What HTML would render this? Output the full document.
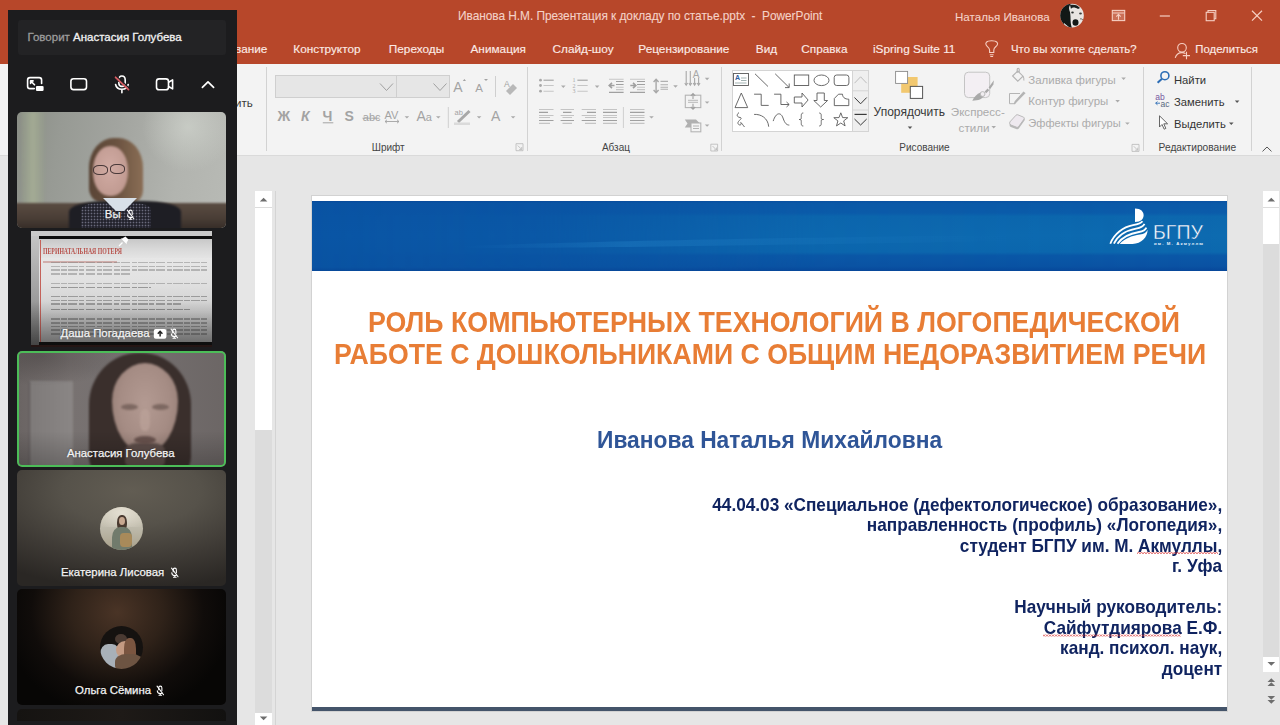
<!DOCTYPE html>
<html><head><meta charset="utf-8">
<style>
*{margin:0;padding:0;box-sizing:border-box}
html,body{width:1280px;height:725px;overflow:hidden;background:#E6E6E6;font-family:"Liberation Sans",sans-serif;position:relative}
.a{position:absolute}
.t{position:absolute;white-space:nowrap;line-height:1}
#top{left:0;top:0;width:1280px;height:64px;background:#B7472A}
#top .t{color:#FBEAE5;font-size:11.8px;-webkit-text-stroke:0.15px #FBEAE5}
#top .tt{color:#F4D2C8;-webkit-text-stroke:0.1px #F4D2C8}
#rib{left:0;top:64px;width:1280px;height:91.5px;background:#F3F3F3;border-bottom:1px solid #DADADA}
.sep{position:absolute;width:1px;background:#D2D2D2}
.dis{color:#ABABAB}
.lbl{color:#444;font-size:10px}
#slide{left:312px;top:196px;width:915px;height:515px;background:#fff}
#panel{left:8px;top:10px;width:229px;height:711px;background:#1C1C1E}
.tile{position:absolute;left:9px;width:209px;border-radius:5px;overflow:hidden}
.nm{position:absolute;color:#F4F4F4;font-size:11.4px;white-space:nowrap;line-height:1;-webkit-text-stroke:0.25px #F4F4F4;text-shadow:0 0 2px rgba(0,0,0,0.5)}
</style></head><body>
<!-- workspace -->
<div class="a" style="left:255px;top:191px;width:17px;height:534px;background:#DCDCDC"></div>
<div class="a" style="left:255px;top:191px;width:17px;height:16px;background:#fff"></div>
<div class="a" style="left:255px;top:208px;width:17px;height:222px;background:#fff"></div>
<div class="a" style="left:255px;top:713px;width:17px;height:12px;background:#fff"></div>
<div class="a" style="left:275px;top:191px;width:1px;height:534px;background:#D4D4D4"></div>
<div class="a" style="left:1263px;top:191px;width:16px;height:466px;background:#DCDCDC"></div>
<div class="a" style="left:1263px;top:191px;width:16px;height:16px;background:#fff"></div>
<div class="a" style="left:1263px;top:208px;width:16px;height:36px;background:#fff"></div>
<div class="a" style="left:1263px;top:657px;width:16px;height:15px;background:#fff"></div>
<svg class="a" style="left:0;top:0" width="1280" height="725" viewBox="0 0 1280 725">
  <g fill="#6E6E6E">
    <path d="M259.8 201.5 h7.6 l-3.8 -3.8z M259.8 716.5 h7.6 l-3.8 3.8z"/>
    <path d="M1267.5 201.5 h7.6 l-3.8 -3.8z M1267.5 662 h7.6 l-3.8 3.8z"/>
    <path d="M1267.5 682 h7.6 l-3.8 -3.8z M1267.5 686 h7.6 l-3.8 -3.8z M1267.5 696 h7.6 l-3.8 3.8z M1267.5 700 h7.6 l-3.8 3.8z"/>
  </g>
</svg>
<!-- slide -->
<div class="a" style="left:311px;top:195px;width:917px;height:517px;border:1px solid #D2D2D2"></div>
<div id="slide" class="a">
  <div class="a" style="left:0;top:5px;width:915px;height:70px;background:linear-gradient(180deg,#08499A 0px,#0A53A3 2px,#0A55A5 50%,#0A53A2 66px,#08499A 70px)"></div>
  <svg class="a" style="left:0;top:5px" width="915" height="70" viewBox="0 0 915 70">
    <defs>
      <linearGradient id="vg" x1="0" x2="0" y1="0" y2="1"><stop offset="0" stop-color="#0A52A2"/><stop offset="0.04" stop-color="#0B5AA8"/><stop offset="0.17" stop-color="#0B5CAA"/><stop offset="0.22" stop-color="#0C68AE"/><stop offset="0.5" stop-color="#0D6BB0"/><stop offset="0.73" stop-color="#0C68AE"/><stop offset="0.78" stop-color="#0A58A7"/><stop offset="0.93" stop-color="#0A53A3"/><stop offset="1" stop-color="#07479A"/></linearGradient>
      <linearGradient id="hm" x1="0" x2="1" y1="0" y2="0"><stop offset="0" stop-color="#fff" stop-opacity="0"/><stop offset="0.25" stop-color="#fff" stop-opacity="0.15"/><stop offset="0.55" stop-color="#fff" stop-opacity="0.85"/><stop offset="1" stop-color="#fff" stop-opacity="1"/></linearGradient>
      <mask id="mk"><rect x="0" y="0" width="915" height="70" fill="url(#hm)"/></mask>
      <linearGradient id="sk" x1="0" x2="1" y1="0" y2="0"><stop offset="0" stop-color="#2A8CD0" stop-opacity="0"/><stop offset="0.3" stop-color="#2A8CD0" stop-opacity="0.3"/><stop offset="0.6" stop-color="#2A8CD0" stop-opacity="0.15"/><stop offset="1" stop-color="#2A8CD0" stop-opacity="0"/></linearGradient>
    </defs>
    <rect x="0" y="0" width="915" height="70" fill="url(#vg)" mask="url(#mk)"/>
    <path d="M150 45 C300 40 450 37 700 34 L700 40 C450 44 300 47 150 47 Z" fill="url(#sk)"/>
  </svg>
  <div class="a" style="left:0;top:511px;width:915px;height:4px;background:#44546A"></div>
</div>
<svg class="a" style="left:1100px;top:200px" width="110" height="50" viewBox="1100 200 110 50">
  <g transform="translate(1104 204)">
    <path d="M31 4.6 C37 4.6 39.6 8 39.6 11.3 C39.6 15 37 18 31 18 Z" fill="#fff"/>
    <g stroke="#fff" stroke-width="1.8" fill="none">
      <path d="M6.3 39.7 C10 30 19 23 29 21.2 C34 20.3 37 19.5 38.5 17.3"/>
      <path d="M9.9 39.7 C13.5 32 22 26.5 32 24.6 C36.5 23.8 39.3 22.5 40.5 19.9"/>
      <path d="M13.5 39.7 C17.5 34 26 29.5 35 28 C39 27.3 41.3 26 42.4 23.6"/>
    </g>
    <path d="M15.8 39.9 C20 35 28 31.5 36 30.6 C40 30 42.5 28.5 43.6 25.8 C43.6 33 37.5 39.9 28.5 39.9 Z" fill="#fff"/>
  </g>
  <text x="1153" y="239" font-family="Liberation Sans" font-size="21" fill="#fff" stroke="#0C66AE" stroke-width="0.45" textLength="50" lengthAdjust="spacingAndGlyphs">БГПУ</text>
  <text x="1154" y="245" font-family="Liberation Sans" font-weight="700" font-size="4.3" fill="#EAF2FB" textLength="49" lengthAdjust="spacing">им. М. Акмуллы</text>
</svg>
<div class="t" style="left:368.4px;top:307.7px;font-size:28.7px;font-weight:700;color:#E87D35;transform:scaleX(0.932);transform-origin:0 0">РОЛЬ КОМПЬЮТЕРНЫХ ТЕХНОЛОГИЙ В ЛОГОПЕДИЧЕСКОЙ</div>
<div class="t" style="left:334px;top:340px;font-size:28.7px;font-weight:700;color:#E87D35;transform:scaleX(0.930);transform-origin:0 0">РАБОТЕ С ДОШКОЛЬНИКАМИ С ОБЩИМ НЕДОРАЗВИТИЕМ РЕЧИ</div>
<div class="t" style="left:596.8px;top:427.7px;font-size:24.7px;font-weight:700;color:#2F5597;transform:scaleX(0.923);transform-origin:0 0">Иванова Наталья Михайловна</div>
<div class="a" style="left:400px;top:495px;width:822.2px;text-align:right;font-size:18.1px;line-height:20.45px;font-weight:700;color:#102460;white-space:nowrap;transform:scaleX(0.950);transform-origin:100% 0">44.04.03 «Специальное (дефектологическое) образование»,<br>направленность (профиль) «Логопедия»,<br>студент БГПУ им. М. Акмуллы,<br>г. Уфа<br>&nbsp;<br>Научный руководитель:<br>Сайфутдиярова Е.Ф.<br>канд. психол. наук,<br>доцент</div>
<svg class="a" style="left:0;top:0" width="1280" height="725" viewBox="0 0 1280 725">
  <defs><pattern id="zz" x="0" y="0" width="3" height="2" patternUnits="userSpaceOnUse"><path d="M0 1.6 L1.5 0.4 L3 1.6" stroke="#D42A2A" stroke-width="0.85" fill="none"/></pattern></defs>
  <rect x="1137" y="552" width="81" height="2" fill="url(#zz)"/>
  <rect x="1043" y="634.5" width="138" height="2" fill="url(#zz)"/>
</svg>
<!-- top bar -->
<div id="top" class="a">
  <div class="t tt" style="left:458px;top:11px;font-size:11.9px;letter-spacing:-0.045px">Иванова Н.М. Презентация к докладу по статье.pptx&nbsp; -&nbsp; PowerPoint</div>
  <div class="t tt" style="left:955px;top:11px;font-size:11.6px">Наталья Иванова</div>
  <div class="t" style="left:208px;top:43.6px">Рисование</div>
  <div class="t" style="left:293.3px;top:43.6px">Конструктор</div>
  <div class="t" style="left:388.8px;top:43.6px">Переходы</div>
  <div class="t" style="left:470.5px;top:43.6px">Анимация</div>
  <div class="t" style="left:552.5px;top:43.6px">Слайд-шоу</div>
  <div class="t" style="left:638.3px;top:43.6px">Рецензирование</div>
  <div class="t" style="left:755.8px;top:43.6px">Вид</div>
  <div class="t" style="left:801.3px;top:43.6px">Справка</div>
  <div class="t" style="left:873px;top:43.6px">iSpring Suite 11</div>
  <div class="t" style="left:1011px;top:43.6px;font-size:11.36px">Что вы хотите сделать?</div>
  <div class="t" style="left:1195.3px;top:43.6px;font-size:11.35px">Поделиться</div>
  <svg class="a" style="left:0;top:0" width="1280" height="64" viewBox="0 0 1280 64">
    <g fill="none" stroke="#F6CFC3" stroke-width="1.1">
      <!-- bulb -->
      <path d="M989.6 52.5 L989.6 50 C989.6 47.5 986.3 46 986.3 45.3 C985.2 43.5 985.6 40.8 991.7 40.8 C997.8 40.8 998.2 43.5 997.1 45.3 C996.5 46.5 993.8 47.5 993.8 50 L993.8 52.5 Z" />
      <path d="M989.8 54.7 H993.6 M990.3 56.5 H993.1"/>
      <!-- person plus -->
      <circle cx="1182" cy="47.8" r="4.3"/>
      <path d="M1175.2 57.8 C1176.2 54.5 1178.5 52.6 1182 52.6 C1183.5 52.6 1184.6 53 1185.5 53.6"/>
      <path d="M1186.5 51.8 V59.2 M1182.8 55.6 H1190"/>
      <!-- window buttons -->
      <path d="M1159.8 16 H1169.9" stroke-width="1.2"/>
      <rect x="1206.2" y="12.3" width="8" height="8.4"/>
      <path d="M1208 12.3 V10.5 H1215.8 V18.8 H1214.2"/>
      <path d="M1252 10.8 L1262 20.6 M1262 10.8 L1252 20.6" stroke-width="1.2"/>
      <rect x="1112.3" y="10.4" width="12.4" height="10.2" fill="rgba(255,215,200,0.28)"/>
    </g>
    <path d="M1112.8 13 H1124.2" stroke="#F6CFC3" stroke-width="1"/>
    <path d="M1118.5 19.8 V14.5 M1116.3 16.6 L1118.5 14.3 L1120.7 16.6" stroke="#F6CFC3" stroke-width="1.1" fill="none"/>
    <!-- avatar -->
    <defs><clipPath id="av"><circle cx="1072" cy="15.6" r="11.8"/></clipPath></defs>
    <g clip-path="url(#av)">
      <rect x="1060" y="3" width="25" height="25" fill="#E9E5E2"/>
      <path d="M1060 3 H1072 C1068 6 1069 9 1070 12 C1071 18 1070 23 1072 28 H1060 Z" fill="#121816"/>
      <path d="M1070 5 C1074 4 1078 5 1080 8 L1078 9 C1075 7 1072 7 1071 9 Z" fill="#1A1F1D"/>
      <path d="M1064 23 C1066 25 1068 26 1070 28 L1064 28 Z" fill="#F2EEEA"/>
      <ellipse cx="1075.5" cy="22.5" rx="3" ry="3.2" fill="#141816"/>
      <ellipse cx="1072.5" cy="12.5" rx="1.3" ry="0.9" fill="#2A2E2C"/>
      <ellipse cx="1080.5" cy="13.5" rx="1.4" ry="1" fill="#3A3E3C"/>
      <path d="M1080 19 C1081 18.5 1082 19 1083 20" stroke="#444" stroke-width="0.8" fill="none"/>
    </g>
  </svg>
</div>
<!-- ribbon -->
<div id="rib" class="a"></div>
<div class="sep" style="left:266px;top:67px;height:84px"></div>
<div class="sep" style="left:527px;top:67px;height:84px"></div>
<div class="sep" style="left:721px;top:67px;height:84px"></div>
<div class="sep" style="left:1143px;top:67px;height:84px"></div>
<div class="sep" style="left:1251px;top:67px;height:84px"></div>
<div class="t" style="left:235px;top:97.5px;font-size:11.5px;color:#3A3A3A">ить</div>
<div class="a" style="left:275px;top:75px;width:122px;height:23px;background:#E6E6E6;border:1px solid #CFCFCF"></div>
<div class="a" style="left:396px;top:75px;width:54px;height:23px;background:#E6E6E6;border:1px solid #CFCFCF"></div>
<div class="t lbl" style="left:371.8px;top:142.7px">Шрифт</div>
<div class="t lbl" style="left:601.9px;top:142.7px">Абзац</div>
<div class="t lbl" style="left:899.3px;top:142.7px">Рисование</div>
<div class="t lbl" style="left:1158.6px;top:142.7px;font-size:10.2px">Редактирование</div>
<div class="t" style="left:873.6px;top:105.6px;font-size:12px;color:#383838">Упорядочить</div>
<div class="t dis" style="left:950.8px;top:105.6px;font-size:11.6px">Экспресс-</div>
<div class="t dis" style="left:958.6px;top:121.6px;font-size:11.6px">стили</div>
<div class="t dis" style="left:1028.3px;top:74.5px;font-size:11.45px">Заливка фигуры</div>
<div class="t dis" style="left:1028.3px;top:96.3px;font-size:11.45px">Контур фигуры</div>
<div class="t dis" style="left:1028.3px;top:118.3px;font-size:11.1px">Эффекты фигуры</div>
<div class="t" style="left:1174px;top:74.5px;font-size:11.24px;color:#333">Найти</div>
<div class="t" style="left:1174px;top:97.3px;font-size:11.24px;color:#333">Заменить</div>
<div class="t" style="left:1174px;top:119px;font-size:11.24px;color:#333">Выделить</div>
<!-- gallery -->
<div class="a" style="left:731.5px;top:69.5px;width:121px;height:62px;background:#fff;border:1px solid #D4D4D4"></div>
<div class="a" style="left:852px;top:69.5px;width:16.5px;height:62px;background:#EFEFEF;border:1px solid #D4D4D4"></div>
<svg class="a" style="left:0;top:0" width="1280" height="155" viewBox="0 0 1280 155">
  <!-- font group -->
  <path d="M380 83.5 L386.5 90.5 L393 83.5" stroke="#A0A0A0" stroke-width="1" fill="none"/>
  <path d="M433.5 83.5 L440 90.5 L446.5 83.5" stroke="#A0A0A0" stroke-width="1" fill="none"/>
  <g font-family="Liberation Sans" fill="#A3A3A3">
    <text x="453.3" y="91.8" font-size="14">A</text>
    <text x="475.2" y="91.8" font-size="11.5">A</text>
    <text x="277.6" y="121.3" font-size="14" font-weight="700">Ж</text>
    <text x="301" y="121.3" font-size="14" font-weight="700" font-style="italic">К</text>
    <text x="322.5" y="121.3" font-size="14" font-weight="700">Ч</text>
    <text x="344.6" y="121.3" font-size="14" font-weight="700">S</text>
    <text x="362.8" y="121.3" font-size="11">abc</text>
    <text x="384.5" y="118.5" font-size="11">AV</text>
    <text x="416.5" y="121.3" font-size="14">A</text>
    <text x="425.8" y="121.3" font-size="11">a</text>
    <text x="491" y="121.3" font-size="14">A</text>
    <text x="454.6" y="115.3" font-size="7.5">ab</text>
    <text x="504" y="86.8" font-size="8.5">A</text>
  </g>
  <path d="M462.8 81 L464.4 79 L466 81 Z M484 79 L488 79 L486 81 Z" fill="#A3A3A3"/>
  <path d="M322.8 122.8 H333.3" stroke="#A3A3A3" stroke-width="1"/>
  <path d="M362.5 118.2 H379.5" stroke="#A3A3A3" stroke-width="0.9"/>
  <path d="M385 121.5 H399 M387 119.8 L385 121.5 L387 123.2 M397 119.8 L399 121.5 L397 123.2" stroke="#A3A3A3" stroke-width="0.9" fill="none"/>
  <path d="M469.5 111 L458 122" stroke="#A8A8A8" stroke-width="3"/>
  <rect x="454" y="122.5" width="16" height="2.5" fill="#DADADA"/>
  <path d="M506 91 L513 84 L517 88 L510 95 Z" fill="#B8B8B8"/>
  <path d="M495.5 76 V97 M448.3 107 V128 M623.4 107 V128" stroke="#CFCFCF" stroke-width="1"/>
  <!-- dropdown triangles -->
  <g fill="#ABABAB">
    <path d="M404.6 116.2 h4.6 l-2.3 2.4z M436 116.2 h4.6 l-2.3 2.4z M476.8 116.2 h4.6 l-2.3 2.4z M510.8 116.2 h4.6 l-2.3 2.4z"/>
    <path d="M561 85.5 h4.6 l-2.3 2.4z M594.8 85.5 h4.6 l-2.3 2.4z M673.2 85.3 h4.6 l-2.3 2.4z M649.2 116.2 h4.6 l-2.3 2.4z"/>
    <path d="M704.8 77.8 h4.6 l-2.3 2.4z M704.8 101.4 h4.6 l-2.3 2.4z M704.8 124.4 h4.6 l-2.3 2.4z"/>
    <path d="M1121.3 77.5 h4.6 l-2.3 2.4z M1115.3 100 h4.6 l-2.3 2.4z M1125.1 122.4 h4.6 l-2.3 2.4z M991.4 126 h4.6 l-2.3 2.4z"/>
  </g>
  <g fill="#555">
    <path d="M907.7 126.6 h4.6 l-2.3 2.4z M1234.8 100.6 h4.6 l-2.3 2.4z M1229 122.6 h4.6 l-2.3 2.4z"/>
  </g>
  <!-- paragraph group -->
  <g font-family="Liberation Serif" font-size="6" fill="#A8A8A8"><text x="572.6" y="82.3">1</text><text x="572.6" y="87.8">2</text><text x="572.6" y="93.4">3</text></g>
  <g fill="#A8A8A8"><circle cx="540.5" cy="80.2" r="1.4"/><circle cx="540.5" cy="85.5" r="1.4"/><circle cx="540.5" cy="91.2" r="1.4"/></g>
  <g stroke-width="1.1">
    <path d="M543.5 80.2 H553.7" stroke="#A0A0A0"/><path d="M543.5 85.5 H553.7 M543.5 91.2 H553.7" stroke="#C6C6C6"/>
    <path d="M577.4 80.2 H587.7" stroke="#A0A0A0"/><path d="M577.4 85.5 H587.7 M577.4 91.2 H587.7" stroke="#C6C6C6"/>
    <path d="M609 79.2 H623.6 M616 87.3 H623.6 M616 89.6 H623.6" stroke="#C6C6C6"/><path d="M616 81.5 H623.6 M616 84.5 H623.6 M609 92.4 H623.6" stroke="#A0A0A0"/>
    <path d="M630 79.2 H645 M637 87.3 H645 M637 89.6 H645" stroke="#C6C6C6"/><path d="M637 81.5 H645 M637 84.5 H645 M630 92.4 H645" stroke="#A0A0A0"/>
    <path d="M660.5 81.4 H668 M660.5 84.7 H668 M660.5 87.3 H668 M660.5 89.3 H668" stroke="#B0B0B0"/>
  </g>
  <path d="M614.5 85.5 H609.5 M612 82.8 L609.2 85.5 L612 88.2" stroke="#A0A0A0" stroke-width="1.6" fill="none"/>
  <path d="M630.3 85.5 H635.5 M633 82.8 L635.8 85.5 L633 88.2" stroke="#A0A0A0" stroke-width="1.6" fill="none"/>
  <path d="M656.1 79.5 V92.5 M653.6 82 L656.1 79.3 L658.6 82 M653.6 90 L656.1 92.7 L658.6 90" stroke="#A8A8A8" stroke-width="1.4" fill="none"/>
  <g stroke-width="1.1">
    <path d="M539 109.5 H553.5 M539 115.5 H553.5 M539 117.5 H550 M539 123.4 H550" stroke="#C4C4C4"/><path d="M539 112.4 H548 M539 120.5 H553.5" stroke="#A0A0A0"/>
    <path d="M560.6 109.5 H574 M560.6 115.5 H574 M562.5 117.5 H572 M562.5 123.4 H572" stroke="#C4C4C4"/><path d="M563 112.4 H571.5 M560.6 120.5 H574" stroke="#A0A0A0"/>
    <path d="M581.7 109.5 H596 M581.7 115.5 H596 M585 117.5 H596 M585 123.4 H596" stroke="#C4C4C4"/><path d="M587 112.4 H596 M581.7 120.5 H596" stroke="#A0A0A0"/>
    <path d="M603 109.5 H617 M603 115.5 H617 M603 117.5 H617 M603 123.4 H617" stroke="#C4C4C4"/><path d="M603 112.4 H617 M603 120.5 H617" stroke="#A0A0A0"/>
    <path d="M630 109.5 H644.5 M630 115.5 H644.5 M630 117.5 H644.5 M630 123.4 H644.5" stroke="#C4C4C4"/><path d="M630 112.4 H644.5 M630 120.5 H644.5" stroke="#A0A0A0"/>
  </g>
  <g stroke="#A8A8A8" stroke-width="1.1" fill="none">
    <path d="M686.2 71 V85 M690.3 71 V85 M694.6 78 V85 M698.6 78 V85"/>
    <path d="M684.8 83 L686.2 85.3 L687.6 83 M688.9 83 L690.3 85.3 L691.7 83 M693.2 83 L694.6 85.3 L696 83 M697.2 83 L698.6 85.3 L700 83"/>
    <rect x="685.3" y="95.2" width="15.5" height="12.4" stroke="#B4B4B4"/>
    <path d="M693 93.5 V99 M690.8 95.8 L693 93.5 L695.2 95.8 M693 103.8 V109.3 M690.8 107 L693 109.3 L695.2 107" stroke="#A0A0A0"/>
    <path d="M688 100.4 H698 M688 102.4 H698" stroke="#C4C4C4"/>
    <rect x="691" y="123" width="9.8" height="8.8" stroke="#B4B4B4" fill="#F3F3F3"/>
    <path d="M693 126 H699 M693 128.5 H699" stroke="#B4B4B4"/>
    <path d="M710.8 144.2 h6.8 v6.8 h-6.8z M712.5 146 L716.5 150 M716.5 147.5 V150 H714" stroke="#B8B8B8" stroke-width="0.8"/>
    <path d="M516 143.7 h7 v7 h-7z M517.7 145.5 L521.7 149.5 M521.7 147 V149.5 H519.2" stroke="#B8B8B8" stroke-width="0.8"/>
    <path d="M1132 144.4 h7 v7 h-7z M1133.7 146.2 L1137.7 150.2 M1137.7 147.7 V150.2 H1135.2" stroke="#B8B8B8" stroke-width="0.8"/>
  </g>
  <text x="692.8" y="77.8" font-family="Liberation Sans" font-size="10" fill="#A8A8A8">A</text>
  <path d="M684.8 119.4 H696 L699.5 123 H691 V127.4 H684.8 L687.5 123.4 Z" fill="#B0B0B0"/>
  <!-- gallery shapes -->
  <g stroke="#5A5A5A" stroke-width="0.9" fill="none">
    <rect x="733.5" y="73.5" width="15" height="12"/>
    <path d="M741 78 H746.5 M741 80.5 H746.5 M735 83 H746.5" stroke="#9AA"/>
    <path d="M755 73.8 L768 86.5"/>
    <path d="M775.2 73.8 L789 87.4 M789.2 83.5 V87.6 H785"/>
    <rect x="794.3" y="75" width="14.4" height="10.5"/>
    <ellipse cx="821.5" cy="80.3" rx="7.5" ry="5.3"/>
    <rect x="834.2" y="75" width="14.7" height="10.5" rx="2.5"/>
    <path d="M735 107.6 L741.3 93 L747.7 107.6 Z"/>
    <path d="M754.1 94.2 H761.2 V105.4 H768.7"/>
    <path d="M774.1 94.2 H780.9 V104.5 H789 M786.5 102 L789.2 104.5 L786.5 107"/>
    <path d="M794.3 97 H802 V93 L808.1 100 L802 107 V103 H794.3 Z"/>
    <path d="M817 93 H824.3 V100.5 H827.6 L820.7 107 L813.8 100.5 H817 Z"/>
    <path d="M834.3 98.5 L838.5 94.2 H842.5 C842.5 97 844.5 99.2 848.8 99.2 V105.6 H834.3 Z"/>
    <path d="M739 112.5 C736 115 737 117 740 117.5 C744 118 737 121 738 123.5 C739 126 742 125 741 123 C740 121 743 125 744.5 127"/>
    <path d="M754.1 114.4 C761 114 768 118 768.7 126.7"/>
    <path d="M773.2 121.1 C776 112 781 112 783 118 C785 124 787 125 789.3 125.1"/>
    <path d="M803.3 113 C800.5 113 801.5 116 801.2 118.5 C801 119.5 800 119.5 799 119.5 C800 119.5 801 119.5 801.2 120.5 C801.5 123 800.5 126 803.3 126"/>
    <path d="M819.2 113 C822 113 821 116 821.3 118.5 C821.5 119.5 822.5 119.5 823.5 119.5 C822.5 119.5 821.5 119.5 821.3 120.5 C821 123 822 126 819.2 126"/>
    <path d="M840.8 112.8 L842.6 117.6 L847.8 117.7 L843.7 120.9 L845.1 125.9 L840.8 123 L836.5 125.9 L837.9 120.9 L833.8 117.7 L839 117.6 Z"/>
  </g>
  <text x="735" y="80.3" font-family="Liberation Sans" font-weight="700" font-size="7" fill="#2E5C9E">A</text>
  <path d="M852.5 90.8 H868 M852.5 110 H868" stroke="#D4D4D4" stroke-width="1"/>
  <path d="M854.5 83.2 L860.6 76.8 L866.7 83.2" stroke="#BDBDBD" stroke-width="1" fill="none"/>
  <path d="M854.5 97.5 L860.6 103.8 L866.7 97.5" stroke="#3A3A3A" stroke-width="1" fill="none"/>
  <path d="M854.5 114.4 H866.7" stroke="#3A3A3A" stroke-width="1.2"/>
  <path d="M854.5 119 L860.6 125 L866.7 119" stroke="#3A3A3A" stroke-width="1" fill="none"/>
  <!-- arrange -->
  <rect x="901.2" y="77" width="16.4" height="15.8" fill="#F2C86F"/>
  <rect x="895.6" y="71.4" width="12" height="12" fill="#fff" stroke="#8A8A8A" stroke-width="0.9"/>
  <rect x="910.3" y="86.4" width="12.3" height="12" fill="#fff" stroke="#555" stroke-width="1"/>
  <!-- express styles -->
  <rect x="964.5" y="72.2" width="25.2" height="25.4" rx="4" fill="#F3EFF3" stroke="#C4C4C4" stroke-width="1"/>
  <path d="M972.3 100.8 C974 97 977 94 980.5 92.6 L983.8 95.8 C982.4 99 978.5 100.6 972.3 100.8 Z" fill="#A9A9A9"/>
  <circle cx="982.6" cy="94" r="2.4" fill="#F0EDF0" stroke="#B4B4B4" stroke-width="0.9"/>
  <path d="M984.6 91.6 L987.6 88.6 L989.2 90.2 L986.2 93.2 Z" fill="#A9A9A9"/>
  <path d="M988.6 87.4 L993.9 80.2 L993.4 84.5 L990.2 89 Z" fill="#A9A9A9"/>
  <!-- shape fill/outline/effects icons -->
  <g stroke="#B4B4B4" stroke-width="1" fill="none">
    <path d="M1012.6 76 L1017.8 71 L1023 76.2 L1017.8 81.2 Z" stroke-width="1.1"/>
    <path d="M1017.2 73 V69.3 Q1017.2 68.2 1018.2 68.2 Q1019.2 68.2 1019.2 69.3 V72.5 M1023 76.2 Q1024.4 78.2 1023.8 80.5" stroke-width="1.1"/>
    <path d="M1009.5 93.5 H1020 M1009.5 93.5 V103.7 H1014"/>
    <path d="M1024.8 93.2 L1016 102 L1014.3 104 L1015.2 101.5 L1023.5 92.2 Z" fill="#B4B4B4" stroke-width="1.2"/>
  </g>
  <path d="M1009.8 123.5 L1016 116.6 Q1016.8 115.8 1017.8 116.2 L1024 118.6 Q1025.2 119.2 1024.5 120.4 L1018.8 128.6 Q1018 129.6 1016.8 129.2 L1010.8 127 Q1009 126 1009.8 123.5 Z" fill="#B9B9B9"/>
  <path d="M1009.8 122 L1016 115.2 Q1016.8 114.4 1017.8 114.8 L1023.6 117.2 Q1024.8 117.8 1024.1 119 L1018.6 126.6 Q1017.8 127.6 1016.6 127.2 L1010.8 125 Q1009.2 124 1009.8 122 Z" fill="#EEE9EF" stroke="#B4B4B4" stroke-width="0.9"/>
  <!-- editing icons -->
  <circle cx="1164.9" cy="75.7" r="4" stroke="#2C6DB5" stroke-width="1.6" fill="none"/>
  <path d="M1162 78.7 L1157.6 82.8" stroke="#2C6DB5" stroke-width="2"/>
  <text x="1155.3" y="99.8" font-family="Liberation Sans" font-size="8.5" fill="#7659A0">ab</text>
  <text x="1160.5" y="106.5" font-family="Liberation Sans" font-size="8.5" fill="#586A80">ac</text>
  <path d="M1160 103.2 H1155.8 M1157.5 101.6 L1155.6 103.2 L1157.5 104.8" stroke="#2C6DB5" stroke-width="0.9" fill="none"/>
  <path d="M1159.5 115.8 V127 L1162 124.5 L1164.2 129.2 L1165.8 128.4 L1163.8 123.8 H1167.6 Z" stroke="#555" stroke-width="0.9" fill="#fff"/>
  <path d="M1262.5 151.4 L1267 147 L1271.5 151.4" stroke="#555" stroke-width="1" fill="none"/>
</svg>
<!-- video panel -->
<div id="panel" class="a">
  <div class="a" style="left:10px;top:10px;width:208px;height:35px;background:#232325;border-radius:3px"></div>
  <div class="t" style="left:19.5px;top:22.2px;font-size:11.5px;color:#9C9C9C;-webkit-text-stroke:0.3px #9C9C9C">Говорит <span style="color:#F2F2F2;-webkit-text-stroke:0.3px #F2F2F2">Анастасия Голубева</span></div>
  <svg class="a" style="left:0;top:0" width="229" height="100" viewBox="8 10 229 100">
    <g stroke="#fff" stroke-width="1.6" fill="none" stroke-linecap="round" stroke-linejoin="round">
      <path d="M34.3 88.6 H30 Q27.6 88.6 27.6 86.2 V80 Q27.6 77.6 30 77.6 H39.2 Q41.6 77.6 41.6 80 V83.5"/>
      <path d="M34.5 84.8 L30.6 80.9 M30.6 83.4 V80.9 H33.1"/>
      <rect x="70.9" y="78.7" width="15.6" height="10.9" rx="2.6"/>
      <path d="M118.8 80 Q118.8 76 121.9 76 Q125.2 76 125.2 80 V82.5 Q125.2 86.4 121.9 86.4 Q118.8 86.4 118.8 82.5"/>
      <path d="M115.6 84.5 Q116.5 89.3 121.9 89.3 Q127.3 89.3 128.2 84.5 M121.9 89.5 V92.8"/>
      <rect x="156.5" y="78.9" width="12" height="10.9" rx="2.6"/>
      <path d="M168.6 82.2 L172.6 79.9 V88.9 L168.6 86.5"/>
      <path d="M202.4 87.4 L208 81.9 L213.6 87.4" stroke-width="1.7"/>
    </g>
    <rect x="35.9" y="85.9" width="7.7" height="5" rx="1.2" fill="#fff"/>
    <path d="M116.6 76.3 L129.5 88.6" stroke="#1C1C1E" stroke-width="1.4"/><path d="M115.6 77.3 L128.5 89.6" stroke="#D65B61" stroke-width="1.8" stroke-linecap="round"/>
  </svg>

  <!-- tile 1: Вы -->
  <div class="tile" style="top:102px;height:116px;background:linear-gradient(100deg,#8A8E86 0%,#979A94 20%,#A2A49F 45%,#B2B4AF 75%,#B8BAB5 100%)">
    <div class="a" style="filter:blur(1px);left:4px;top:0;width:24px;height:116px;background:linear-gradient(90deg,rgba(150,160,135,0.2),rgba(170,180,150,0.7) 50%,rgba(150,160,135,0.2))"></div>
    <div class="a" style="left:125px;top:0;width:84px;height:60px;background:radial-gradient(ellipse at 55% 25%,rgba(208,212,205,0.7),rgba(200,204,198,0) 70%)"></div>
    <div class="a" style="filter:blur(1px);left:-4px;top:91px;width:217px;height:30px;background:linear-gradient(180deg,#5A4C42,#4A3E36 50%,#2E2622)"></div>
    <div class="a" style="filter:blur(1.2px);left:72px;top:26px;width:54px;height:64px;border-radius:46% 46% 18% 22%;background:linear-gradient(90deg,#5A4536,#6A5240 50%,#8A6E55)"></div>
    <div class="a" style="filter:blur(1px);left:76px;top:34px;width:35px;height:50px;border-radius:48% 48% 46% 46%;background:radial-gradient(ellipse at 48% 45%,#D2ACA4,#C29C93 65%,#A8857A 100%)"></div>
    <div class="a" style="filter:blur(0.5px);left:76px;top:53px;width:15px;height:10px;border:1.3px solid #4A3A3A;border-radius:40%"></div>
    <div class="a" style="filter:blur(0.5px);left:93px;top:52px;width:15px;height:10px;border:1.3px solid #4A3A3A;border-radius:40%"></div>
    <div class="a" style="filter:blur(1px);left:52px;top:89px;width:112px;height:30px;border-radius:35% 35% 0 0;background:#1E1E24"></div>
    <div class="a" style="filter:blur(0.6px);left:64px;top:91px;width:70px;height:26px;background:radial-gradient(circle,#6A6A7C 0.7px,#24242E 1.1px) 0 0/3px 3px;border-radius:25% 25% 0 0"></div>
    <div class="a" style="filter:blur(0.5px);left:86px;top:86px;width:34px;height:13px;background:#D8E0E8;clip-path:polygon(0 0,100% 0,62% 100%,38% 100%)"></div>
  </div>
  <!-- tile 2: screen share -->
  <div class="a" style="left:23px;top:221px;width:181px;height:116px;background:#CACACA;overflow:hidden">
    <div class="a" style="left:0;top:5px;width:8px;height:111px;background:linear-gradient(180deg,#C4C4C4,#9A9A9A 60%,#6A6A6A)"></div>
    <div class="a" style="left:8px;top:5px;width:173px;height:3px;background:#0E0E0E"></div>
    <div class="a" style="left:8px;top:8px;width:173px;height:103px;background:linear-gradient(180deg,#EAEAEA 0%,#E2E2E2 40%,#CFCFCF 70%,#A8A8A8 100%)"></div>
    <div class="a" style="left:8px;top:8px;width:173px;height:19px;background:linear-gradient(180deg,#C8C8C8,#D8D8D8 50%,#E4E4E4)"></div>
    <div class="a" style="left:9px;top:9px;width:1.4px;height:102px;background:#C4625A"></div>
    <div class="t" style="left:11.8px;top:15.6px;font-family:'Liberation Serif';font-size:8.5px;font-weight:700;color:#B8524C;transform:scaleX(0.68);transform-origin:0 0">ПЕРИНАТАЛЬНАЯ ПОТЕРЯ</div>
    <div class="a" style="left:12px;top:29.6px;width:74px;height:2px;background:#B86A64;opacity:0.45"></div>
    <div class="a" style="left:20px;top:30.5px;width:157px;height:1.6px;filter:blur(0.35px);background:repeating-linear-gradient(90deg,#7A7A7A 0 9px,transparent 9px 10.5px,#7A7A7A 10.5px 16px,transparent 16px 17.5px);opacity:0.45"></div>
    <div class="a" style="left:20px;top:34.5px;width:157px;height:1.6px;filter:blur(0.35px);background:repeating-linear-gradient(90deg,#7A7A7A 0 9px,transparent 9px 10.5px,#7A7A7A 10.5px 16px,transparent 16px 17.5px);opacity:0.45"></div>
    <div class="a" style="left:20px;top:38.39999999999998px;width:157px;height:1.6px;filter:blur(0.35px);background:repeating-linear-gradient(90deg,#7A7A7A 0 9px,transparent 9px 10.5px,#7A7A7A 10.5px 16px,transparent 16px 17.5px);opacity:0.45"></div>
    <div class="a" style="left:20px;top:42.39999999999998px;width:80px;height:1.6px;filter:blur(0.35px);background:repeating-linear-gradient(90deg,#7A7A7A 0 9px,transparent 9px 10.5px,#7A7A7A 10.5px 16px,transparent 16px 17.5px);opacity:0.45"></div>
    <div class="a" style="left:20px;top:51.80000000000001px;width:157px;height:1.6px;filter:blur(0.35px);background:repeating-linear-gradient(90deg,#7A7A7A 0 9px,transparent 9px 10.5px,#7A7A7A 10.5px 16px,transparent 16px 17.5px);opacity:0.45"></div>
    <div class="a" style="left:20px;top:55.60000000000002px;width:100px;height:1.6px;filter:blur(0.35px);background:repeating-linear-gradient(90deg,#555 0 9px,transparent 9px 10.5px,#555 10.5px 16px,transparent 16px 17.5px);opacity:0.5"></div>
    <div class="a" style="left:20px;top:64.69999999999999px;width:157px;height:1.6px;filter:blur(0.35px);background:repeating-linear-gradient(90deg,#606060 0 9px,transparent 9px 10.5px,#606060 10.5px 16px,transparent 16px 17.5px);opacity:0.5"></div>
    <div class="a" style="left:20px;top:68.5px;width:157px;height:1.6px;filter:blur(0.35px);background:repeating-linear-gradient(90deg,#606060 0 9px,transparent 9px 10.5px,#606060 10.5px 16px,transparent 16px 17.5px);opacity:0.5"></div>
    <div class="a" style="left:20px;top:72.39999999999998px;width:130px;height:1.6px;filter:blur(0.35px);background:repeating-linear-gradient(90deg,#606060 0 9px,transparent 9px 10.5px,#606060 10.5px 16px,transparent 16px 17.5px);opacity:0.5"></div>
    <div class="a" style="left:20px;top:77.5px;width:140px;height:1.6px;filter:blur(0.35px);background:repeating-linear-gradient(90deg,#505050 0 9px,transparent 9px 10.5px,#505050 10.5px 16px,transparent 16px 17.5px);opacity:0.5"></div>
    <div class="a" style="left:20px;top:87px;width:157px;height:1.6px;filter:blur(0.35px);background:repeating-linear-gradient(90deg,#555 0 9px,transparent 9px 10.5px,#555 10.5px 16px,transparent 16px 17.5px);opacity:0.45"></div>
    <div class="a" style="left:20px;top:91px;width:157px;height:1.6px;filter:blur(0.35px);background:repeating-linear-gradient(90deg,#555 0 9px,transparent 9px 10.5px,#555 10.5px 16px,transparent 16px 17.5px);opacity:0.45"></div>
    <div class="a" style="left:20px;top:94.5px;width:157px;height:1.6px;filter:blur(0.35px);background:repeating-linear-gradient(90deg,#555 0 9px,transparent 9px 10.5px,#555 10.5px 16px,transparent 16px 17.5px);opacity:0.45"></div>
    <div class="a" style="left:20px;top:98px;width:157px;height:1.6px;filter:blur(0.35px);background:repeating-linear-gradient(90deg,#555 0 9px,transparent 9px 10.5px,#555 10.5px 16px,transparent 16px 17.5px);opacity:0.45"></div>
    <div class="a" style="left:20px;top:102px;width:157px;height:1.6px;filter:blur(0.35px);background:repeating-linear-gradient(90deg,#555 0 9px,transparent 9px 10.5px,#555 10.5px 16px,transparent 16px 17.5px);opacity:0.45"></div>
    <div class="a" style="left:8px;top:111px;width:173px;height:3px;background:#151515"></div>
    <div class="a" style="left:0;top:114px;width:181px;height:2px;background:#3A2220"></div>
    <div class="a" style="left:0;top:70px;width:181px;height:46px;background:linear-gradient(180deg,rgba(0,0,0,0),rgba(0,0,0,0.38))"></div>
    <svg class="a" style="left:85px;top:4px" width="14" height="14" viewBox="0 0 14 14"><path d="M3 11 L6.5 7.5" stroke="#fff" stroke-width="1.3"/><path d="M6 3.5 L9.5 1.5 L12.5 4.5 L10.5 8 L11 9.5 L4.5 3 Z" fill="#fff"/></svg>
  </div>
  <!-- tile 3: Анастасия -->
  <div class="tile" style="top:341px;height:115.5px;background:linear-gradient(90deg,#6A6463 0%,#787271 25%,#757070 55%,#6C6665 100%)">
    <div class="a" style="filter:blur(1px);left:12px;top:30px;width:44px;height:86px;background:linear-gradient(90deg,#7E7A79,#8A8685);border-left:1.5px solid #5A5555;border-top:1px solid #8A8685"></div>
    <div class="a" style="left:0;top:0;width:120px;height:50px;background:radial-gradient(ellipse 70% 60% at 20% 10%,rgba(50,45,45,0.35),rgba(0,0,0,0))"></div>
    <div class="a" style="filter:blur(1.3px);left:72px;top:2px;width:102px;height:130px;border-radius:48% 48% 30% 30% / 40% 40% 20% 20%;background:#3A2F2C"></div>
    <div class="a" style="filter:blur(1.2px);left:95px;top:12px;width:66px;height:90px;border-radius:50% 50% 50% 50% / 42% 42% 58% 58%;background:radial-gradient(ellipse at 50% 45%,#B39A92,#A58C84 55%,#8C756D 100%)"></div>
    <div class="a" style="filter:blur(1.2px);left:108px;top:92px;width:40px;height:26px;border-radius:30%;background:#5E4E4A"></div>
    <div class="a" style="filter:blur(1px);left:104px;top:53px;width:17px;height:6px;border-radius:50%;background:#6E5A54;opacity:0.75"></div>
    <div class="a" style="filter:blur(1px);left:135px;top:53px;width:17px;height:6px;border-radius:50%;background:#6E5A54;opacity:0.75"></div>
    <div class="a" style="filter:blur(1px);left:123px;top:58px;width:10px;height:22px;border-radius:40%;background:#BCA39A;opacity:0.7"></div>
    <div class="a" style="filter:blur(1px);left:117px;top:85px;width:22px;height:8px;border-radius:50%;background:#5A4440;opacity:0.8"></div>
    <div class="a" style="left:0;top:80px;width:209px;height:36px;background:linear-gradient(180deg,rgba(0,0,0,0),rgba(0,0,0,0.22))"></div>
    <div class="a" style="left:0;top:0;width:209px;height:116px;border:2px solid #4CBD58;border-radius:5px"></div>
  </div>
  <!-- tile 4: Екатерина -->
  <div class="tile" style="top:460px;height:115.5px;background:radial-gradient(ellipse 95% 85% at 55% 18%,#625D53 0%,#56524A 35%,#3E3A35 70%,#2A2724 100%)">
    <div class="a" style="left:83px;top:36.5px;width:43.2px;height:43.2px;border-radius:50%;overflow:hidden;background:linear-gradient(180deg,#CFC9B8 0%,#BDB9AA 50%,#A8A08A 100%)">
      <div class="a" style="filter:blur(0.6px);left:0;top:0;width:44px;height:20px;background:radial-gradient(ellipse at 50% 30%,#E4DFD2,rgba(200,195,180,0))"></div>
      <div class="a" style="filter:blur(0.5px);left:17px;top:8px;width:10px;height:16px;border-radius:45%;background:#4A3A30"></div>
      <div class="a" style="filter:blur(0.5px);left:19px;top:10px;width:6px;height:8px;border-radius:50%;background:#C8A890"></div>
      <div class="a" style="filter:blur(0.5px);left:12px;top:20px;width:20px;height:26px;border-radius:40% 40% 10% 10%;background:#717B6C"></div>
      <div class="a" style="filter:blur(0.5px);left:20px;top:26px;width:12px;height:14px;border-radius:30%;background:#A88A5A"></div>
    </div>
  </div>
  <!-- tile 5: Ольга -->
  <div class="tile" style="top:579px;height:115.5px;background:radial-gradient(ellipse 55% 90% at 48% 20%,#4A3426 0%,#2F2219 40%,#100C0A 75%,#070605 100%)">
    <div class="a" style="left:82.5px;top:36.5px;width:43.5px;height:43.5px;border-radius:50%;overflow:hidden;background:#151210">
      <div class="a" style="filter:blur(0.6px);left:0;top:18px;width:20px;height:26px;background:#A8B0B8;border-radius:40%"></div>
      <div class="a" style="filter:blur(0.6px);left:15px;top:8px;width:12px;height:10px;border-radius:50%;background:#4A3A32"></div><div class="a" style="filter:blur(0.6px);left:16px;top:15px;width:18px;height:18px;border-radius:50%;background:#C49A82"></div>
      <div class="a" style="filter:blur(0.6px);left:24px;top:12px;width:12px;height:26px;border-radius:40%;background:#7A5540"></div><div class="a" style="filter:blur(0.6px);left:15px;top:28px;width:28px;height:20px;border-radius:40%;background:#6D5442"></div>
    </div>
  </div>
  <!-- tile 6 -->
  <div class="tile" style="top:699px;height:20px;background:linear-gradient(90deg,#151311,#1E1A17 50%,#121110);border-radius:5px 5px 0 0"></div>
  <div class="a" style="left:0;top:711px;width:229px;height:10px;background:#1C1C1E"></div>

  <!-- names -->
  <div class="nm" style="left:96.8px;top:199.3px">Вы</div>
  <div class="nm" style="left:52.5px;top:318.3px">Даша Погадаева</div>
  <div class="nm" style="left:58.9px;top:437.5px">Анастасия Голубева</div>
  <div class="nm" style="left:53px;top:557.1px">Екатерина Лисовая</div>
  <div class="nm" style="left:67px;top:675.3px">Ольга Сёмина</div>
  <svg class="a" style="left:0;top:0" width="229" height="711" viewBox="8 10 229 711">
    <defs><g id="mic" stroke="#fff" stroke-width="1.5" fill="none" stroke-linecap="round">
      <path d="M-2.2 -2.5 V-5 Q-2.2 -7.5 0 -7.5 Q2.2 -7.5 2.2 -5 V-1"/>
      <path d="M-4.2 -1 Q-4 3 0 3 Q1.5 3 2.5 2.3 M0 3.2 V5.3 M-1.8 5.3 H1.8"/>
      <path d="M-4.5 -7.5 L4.5 4.5"/>
    </g></defs>
    <g transform="translate(130.6 215.5) scale(0.72)"><use href="#mic"/></g>
    <g transform="translate(174.3 334.5) scale(0.72)"><use href="#mic"/></g>
    <g transform="translate(174.8 573.5) scale(0.72)"><use href="#mic"/></g>
    <g transform="translate(160.3 691.5) scale(0.72)"><use href="#mic"/></g>
    <rect x="153.8" y="329" width="12.6" height="9.8" rx="2" fill="#fff"/>
    <path d="M160.1 336.5 V331.5 M157.8 333.8 L160.1 331.3 L162.4 333.8" stroke="#222" stroke-width="1.5" fill="none"/>
  </svg>
</div>
</body></html>
